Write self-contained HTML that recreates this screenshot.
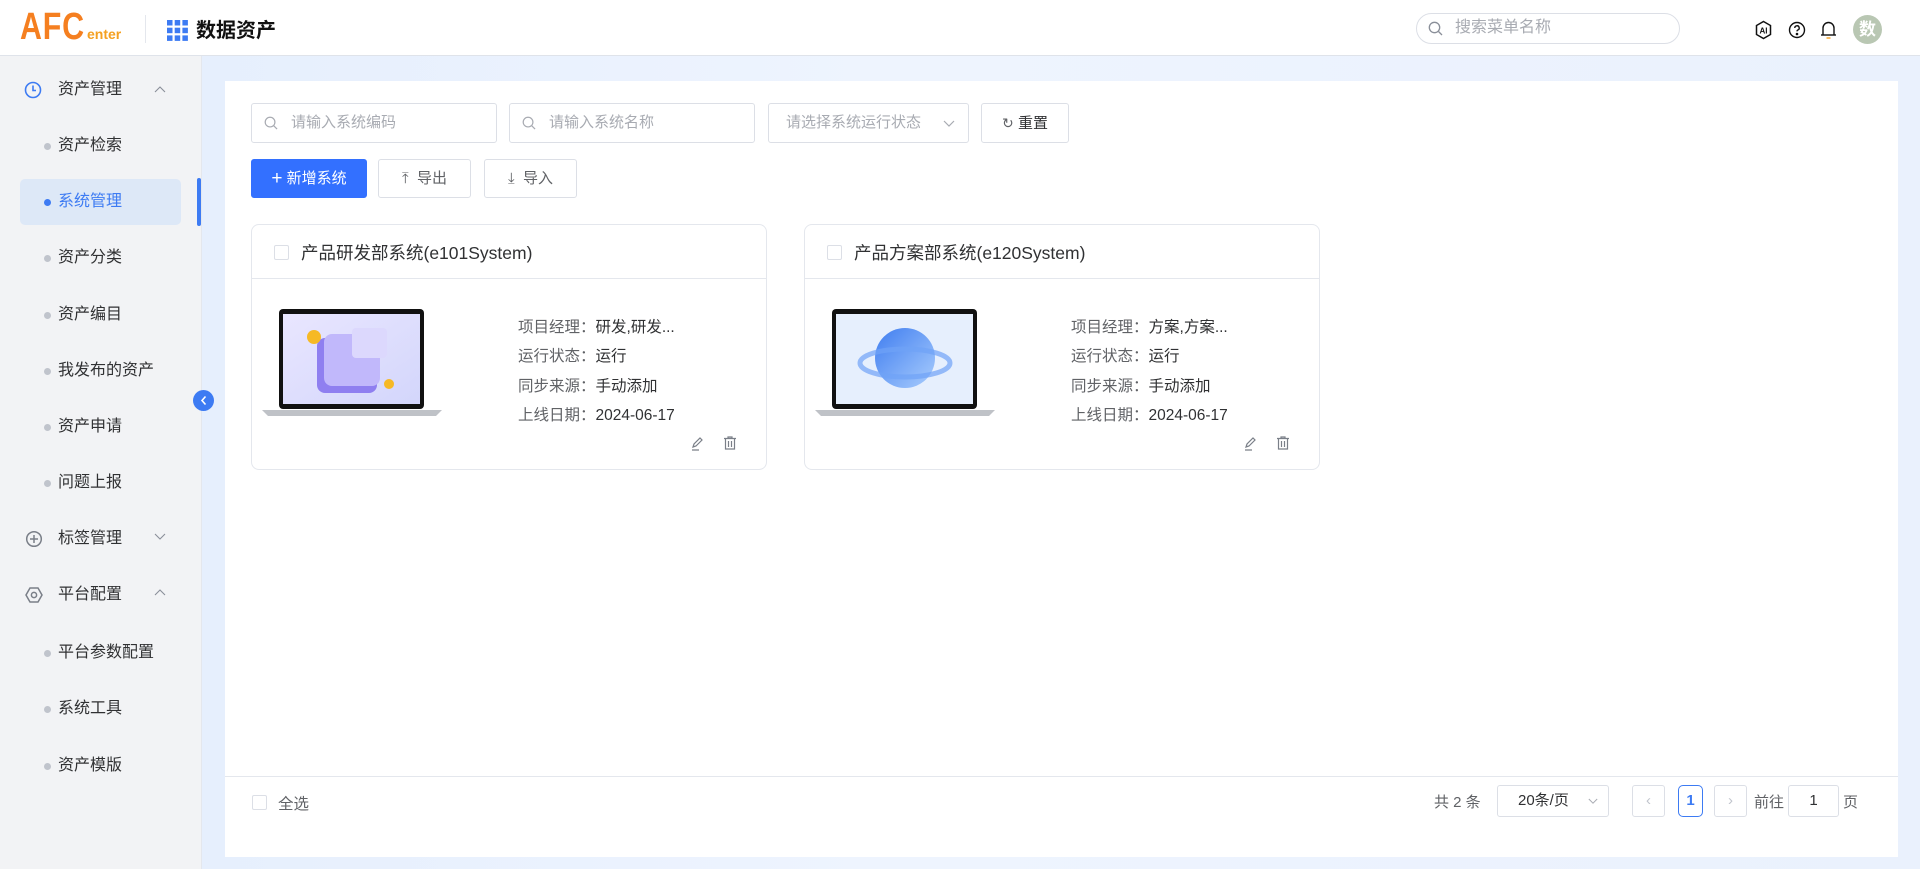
<!DOCTYPE html>
<html><head><meta charset="utf-8"><style>
*{box-sizing:border-box;margin:0;padding:0}
body{width:1920px;height:869px;overflow:hidden;font-family:"Liberation Sans","Noto Sans CJK SC",sans-serif;background:#fff;position:relative;color:#303133}
.abs{position:absolute}
#hdr{left:0;top:0;width:1920px;height:56px;background:#fff;border-bottom:1px solid #dfe3ea}
#side{left:0;top:56px;width:202px;height:813px;background:#f2f3f5;border-right:1px solid #e4e7ed}
#main{left:202px;top:56px;width:1718px;height:813px;background:linear-gradient(90deg,#e6effd 0%,#eef4fe 40%,#eaf1fd 100%)}
#card{left:225px;top:81px;width:1673px;height:776px;background:#fff}
.mi{position:absolute;left:58px;font-size:16px;color:#303133;line-height:20px}
.dot{position:absolute;left:44px;width:7px;height:7px;border-radius:50%;background:#c0c4cc}
.inp{position:absolute;height:40px;border:1px solid #dcdfe6;border-radius:3px;font-size:15px;color:#a8abb2;line-height:38px;background:#fff}
.btn{position:absolute;height:39px;border:1px solid #dcdfe6;border-radius:3px;font-size:15px;color:#606266;line-height:37px;text-align:center;background:#fff}
.sc{position:absolute;width:516px;height:246px;border:1px solid #e4e7ed;border-radius:8px;background:#fff}
.sc .hl{position:absolute;left:0;right:0;top:53px;border-top:1px solid #e4e7ed}
.sc .cb{position:absolute;left:22px;top:20px;width:15px;height:15px;border:1px solid #dcdfe6;border-radius:2px}
.sc .t{position:absolute;left:49px;top:15px;font-size:17.5px;color:#303133}
.sc .inf{position:absolute;left:266px;top:88px;font-size:15.5px;line-height:29.3px;color:#606266}
.sc .inf b{font-weight:normal;color:#303133}
.lap{position:absolute;left:10px;top:83px;width:180px;height:110px}
</style></head><body>
<div id="hdr" class="abs">
 <div class="abs" style="left:20px;top:6px;font-size:38px;font-weight:bold;color:#f57f20;letter-spacing:1px;font-family:'Liberation Sans',sans-serif;transform:scaleX(.8);transform-origin:left">AFC</div>
 <div class="abs" style="left:87px;top:26px;font-size:14px;font-weight:bold;color:#f5a020">enter</div>
 <div class="abs" style="left:145px;top:15px;width:1px;height:28px;background:#e4e7ed"></div>
 <svg class="abs" style="left:167px;top:20px" width="21" height="21" viewBox="0 0 21 21" fill="#3d7bf3"><rect x="0" y="0" width="5.5" height="5.5"/><rect x="7.7" y="0" width="5.5" height="5.5"/><rect x="15.4" y="0" width="5.5" height="5.5"/><rect x="0" y="7.7" width="5.5" height="5.5"/><rect x="7.7" y="7.7" width="5.5" height="5.5"/><rect x="15.4" y="7.7" width="5.5" height="5.5"/><rect x="0" y="15.4" width="5.5" height="5.5"/><rect x="7.7" y="15.4" width="5.5" height="5.5"/><rect x="15.4" y="15.4" width="5.5" height="5.5"/></svg>
 <div class="abs" style="left:196px;top:14px;font-size:20px;font-weight:bold;color:#111">数据资产</div>
 <div class="abs" style="left:1416px;top:13px;width:264px;height:31px;border:1px solid #dcdfe6;border-radius:16px"></div>
 <svg class="abs" style="left:1428px;top:21px" width="15" height="15" viewBox="0 0 15 15" fill="none" stroke="#8a8f99" stroke-width="1.3"><circle cx="6.5" cy="6.5" r="5.2"/><path d="M10.5 10.5l3.5 3.5"/></svg>
 <div class="abs" style="left:1455px;top:18px;font-size:16px;color:#a8abb2;line-height:20px">搜索菜单名称</div>
 <svg class="abs" style="left:1754px;top:20px" width="19" height="20" viewBox="0 0 19 20" fill="none" stroke="#111" stroke-width="1.5"><path d="M9.5 1.5l7 4v9l-7 4-7-4v-9z"/><text x="9.5" y="13.5" font-size="8" font-weight="bold" text-anchor="middle" fill="#111" stroke="none" font-family="Liberation Sans">AI</text></svg>
 <svg class="abs" style="left:1788px;top:21px" width="18" height="18" viewBox="0 0 18 18" fill="none" stroke="#111" stroke-width="1.4"><circle cx="9" cy="9" r="7.5"/><path d="M6.8 7a2.2 2.2 0 1 1 3 2c-.6.3-.8.7-.8 1.4"/><circle cx="9" cy="13" r=".6" fill="#111"/></svg>
 <svg class="abs" style="left:1820px;top:20px" width="17" height="20" viewBox="0 0 17 20" fill="none" stroke="#111" stroke-width="1.4"><path d="M3 15V8a5.5 5.5 0 0 1 11 0v7"/><path d="M1 15h15"/><path d="M6.5 18h4" stroke="#f5a020"/></svg>
 <div class="abs" style="left:1853px;top:15px;width:29px;height:29px;border-radius:50%;background:#b9c7b3;color:#fff;font-size:17px;font-weight:bold;text-align:center;line-height:29px">数</div>
</div>
<div id="side" class="abs">
 <svg class="abs" style="left:24px;top:25px" width="18" height="18" viewBox="0 0 18 18" fill="none" stroke="#3d7bf3" stroke-width="1.6"><circle cx="9" cy="9" r="7.5"/><path d="M9 4.5V9.5h3"/></svg>
 <div class="mi" style="top:24px">资产管理</div>
 <svg class="abs" style="left:154px;top:30px" width="12" height="8" viewBox="0 0 12 8" fill="none" stroke="#8a8f99" stroke-width="1.1"><path d="M1 6l5-5 5 5"/></svg>
 <div class="dot" style="top:87px"></div><div class="mi" style="top:80px">资产检索</div>
 <div class="abs" style="left:20px;top:123px;width:161px;height:46px;background:#dde8f7;border-radius:5px"></div>
 <div class="abs" style="left:197px;top:122px;width:4px;height:48px;background:#3d7bf3;border-radius:2px"></div>
 <div class="dot" style="top:143px;background:#3d7bf3"></div><div class="mi" style="top:136px;color:#3d7bf3">系统管理</div>
 <div class="dot" style="top:199px"></div><div class="mi" style="top:192px">资产分类</div>
 <div class="dot" style="top:256px"></div><div class="mi" style="top:249px">资产编目</div>
 <div class="dot" style="top:312px"></div><div class="mi" style="top:305px">我发布的资产</div>
 <div class="dot" style="top:368px"></div><div class="mi" style="top:361px">资产申请</div>
 <div class="dot" style="top:424px"></div><div class="mi" style="top:417px">问题上报</div>
 <svg class="abs" style="left:25px;top:474px" width="18" height="18" viewBox="0 0 18 18" fill="none" stroke="#7a7f88" stroke-width="1.5"><circle cx="9" cy="9" r="7.3"/><path d="M9 5v8M5 9h8"/></svg>
 <div class="mi" style="top:473px">标签管理</div>
 <svg class="abs" style="left:154px;top:477px" width="12" height="8" viewBox="0 0 12 8" fill="none" stroke="#8a8f99" stroke-width="1.1"><path d="M1 1l5 5 5-5"/></svg>
 <svg class="abs" style="left:25px;top:530px" width="18" height="18" viewBox="0 0 18 18" fill="none" stroke="#7a7f88" stroke-width="1.5"><path d="M5 2h8l4 7-4 7H5L1 9z"/><circle cx="9" cy="9" r="2.6"/></svg>
 <div class="mi" style="top:529px">平台配置</div>
 <svg class="abs" style="left:154px;top:533px" width="12" height="8" viewBox="0 0 12 8" fill="none" stroke="#8a8f99" stroke-width="1.1"><path d="M1 6l5-5 5 5"/></svg>
 <div class="dot" style="top:594px"></div><div class="mi" style="top:587px">平台参数配置</div>
 <div class="dot" style="top:650px"></div><div class="mi" style="top:643px">系统工具</div>
 <div class="dot" style="top:707px"></div><div class="mi" style="top:700px">资产模版</div>
</div>
<div id="main" class="abs"></div>
<div class="abs" style="left:193px;top:390px;width:21px;height:21px;border-radius:50%;background:#3d7bf3"></div>
<svg class="abs" style="left:199px;top:395px" width="10" height="11" viewBox="0 0 10 11" fill="none" stroke="#fff" stroke-width="1.6"><path d="M6.5 1.5L3 5.5l3.5 4"/></svg>
<div id="card" class="abs">
 <div class="inp" style="left:26px;top:22px;width:246px;padding-left:39px">请输入系统编码</div>
 <svg class="abs" style="left:39px;top:35px" width="14" height="14" viewBox="0 0 15 15" fill="none" stroke="#a8abb2" stroke-width="1.3"><circle cx="6.5" cy="6.5" r="5.2"/><path d="M10.5 10.5l3.5 3.5"/></svg>
 <div class="inp" style="left:284px;top:22px;width:246px;padding-left:39px">请输入系统名称</div>
 <svg class="abs" style="left:297px;top:35px" width="14" height="14" viewBox="0 0 15 15" fill="none" stroke="#a8abb2" stroke-width="1.3"><circle cx="6.5" cy="6.5" r="5.2"/><path d="M10.5 10.5l3.5 3.5"/></svg>
 <div class="inp" style="left:543px;top:22px;width:201px;padding-left:17px">请选择系统运行状态</div>
 <svg class="abs" style="left:718px;top:39px" width="12" height="8" viewBox="0 0 12 8" fill="none" stroke="#a8abb2" stroke-width="1.2"><path d="M1 1l5 5 5-5"/></svg>
 <div class="btn" style="left:756px;top:22px;width:88px;height:40px;line-height:38px;color:#303133"><span style="color:#606266;font-size:14px">↻</span> 重置</div>
 <div class="btn" style="left:26px;top:78px;width:116px;background:#3370ff;border-color:#3370ff;color:#fff"><span style="font-size:19px;vertical-align:-1px">+</span> 新增系统</div>
 <div class="btn" style="left:153px;top:78px;width:93px">⤒&nbsp;&nbsp;导出</div>
 <div class="btn" style="left:259px;top:78px;width:93px">⤓&nbsp;&nbsp;导入</div>

 <div class="sc" style="left:26px;top:143px">
  <div class="cb"></div><div class="t">产品研发部系统(e101System)</div><div class="hl"></div>
  <svg class="lap" viewBox="0 0 180 110"><rect x="17" y="1" width="145" height="100" rx="4" fill="#111"/><defs><linearGradient id="g1" x1="0" y1="0" x2="1" y2="1"><stop offset="0" stop-color="#e9e6ff"/><stop offset="1" stop-color="#d3d6fb"/></linearGradient><linearGradient id="g2" x1="0" y1="0" x2="1" y2="1"><stop offset="0" stop-color="#3f7df0"/><stop offset="1" stop-color="#a9cdfd"/></linearGradient></defs><rect x="21" y="6" width="137" height="90" fill="url(#g1)"/><rect x="55" y="30" width="60" height="55" rx="8" fill="#8f7ff0"/><rect x="62" y="26" width="56" height="52" rx="8" fill="#c1b8fb"/><rect x="90" y="20" width="35" height="30" rx="4" fill="#dcd8fd"/><circle cx="52" cy="29" r="7" fill="#f6b925"/><circle cx="127" cy="76" r="5" fill="#f6b925"/><path d="M0 102h180l-6 6H6z" fill="#bfc2c7"/></svg>
  <div class="inf">项目经理：<b>研发,研发...</b><br>运行状态：<b>运行</b><br>同步来源：<b>手动添加</b><br>上线日期：<b>2024-06-17</b></div>
  <svg class="abs" style="left:438px;top:210px" width="16" height="16" viewBox="0 0 16 16" fill="none" stroke="#7a7f88" stroke-width="1.2"><path d="M3 12l1-3 6-6 2 2-6 6zM2 15h7"/></svg>
  <svg class="abs" style="left:470px;top:210px" width="16" height="16" viewBox="0 0 16 16" fill="none" stroke="#7a7f88" stroke-width="1.2"><path d="M2 3.5h12M6 3.5V2h4v1.5M3.5 3.5V14h9V3.5M6.5 6v6M9.5 6v6"/></svg>
 </div>
 <div class="sc" style="left:579px;top:143px">
  <div class="cb"></div><div class="t">产品方案部系统(e120System)</div><div class="hl"></div>
  <svg class="lap" viewBox="0 0 180 110"><rect x="17" y="1" width="145" height="100" rx="4" fill="#111"/><rect x="21" y="6" width="137" height="90" fill="#e6effd"/><circle cx="90" cy="50" r="30" fill="url(#g2)"/><ellipse cx="90" cy="55" rx="45" ry="14" fill="none" stroke="#6fa3f6" stroke-width="5" opacity=".7"/><path d="M0 102h180l-6 6H6z" fill="#bfc2c7"/></svg>
  <div class="inf">项目经理：<b>方案,方案...</b><br>运行状态：<b>运行</b><br>同步来源：<b>手动添加</b><br>上线日期：<b>2024-06-17</b></div>
  <svg class="abs" style="left:438px;top:210px" width="16" height="16" viewBox="0 0 16 16" fill="none" stroke="#7a7f88" stroke-width="1.2"><path d="M3 12l1-3 6-6 2 2-6 6zM2 15h7"/></svg>
  <svg class="abs" style="left:470px;top:210px" width="16" height="16" viewBox="0 0 16 16" fill="none" stroke="#7a7f88" stroke-width="1.2"><path d="M2 3.5h12M6 3.5V2h4v1.5M3.5 3.5V14h9V3.5M6.5 6v6M9.5 6v6"/></svg>
 </div>

 <div class="abs" style="left:0;top:695px;width:1673px;border-top:1px solid #e4e7ed"></div>
 <div class="abs" style="left:27px;top:714px;width:15px;height:15px;border:1px solid #dcdfe6;border-radius:2px"></div>
 <div class="abs" style="left:53px;top:711px;font-size:15.5px;color:#606266">全选</div>
 <div class="abs" style="left:1209px;top:710px;font-size:15px;color:#606266">共 2 条</div>
 <div class="inp" style="left:1272px;top:704px;width:112px;height:32px;line-height:30px;color:#303133;padding-left:20px;font-size:15px">20条/页</div>
 <svg class="abs" style="left:1363px;top:717px" width="10" height="7" viewBox="0 0 12 8" fill="none" stroke="#a8abb2" stroke-width="1.2"><path d="M1 1l5 5 5-5"/></svg>
 <div class="inp" style="left:1407px;top:704px;width:33px;height:32px;line-height:30px;text-align:center;color:#c0c4cc">‹</div>
 <div class="inp" style="left:1453px;top:704px;width:25px;height:32px;line-height:30px;text-align:center;color:#3d7bf3;border-color:#3d7bf3;border-radius:5px;font-weight:bold">1</div>
 <div class="inp" style="left:1489px;top:704px;width:33px;height:32px;line-height:30px;text-align:center;color:#c0c4cc">›</div>
 <div class="abs" style="left:1529px;top:710px;font-size:15px;color:#606266">前往</div>
 <div class="inp" style="left:1563px;top:704px;width:51px;height:32px;line-height:30px;text-align:center;color:#303133">1</div>
 <div class="abs" style="left:1618px;top:710px;font-size:15px;color:#606266">页</div>
</div>
</body></html>
